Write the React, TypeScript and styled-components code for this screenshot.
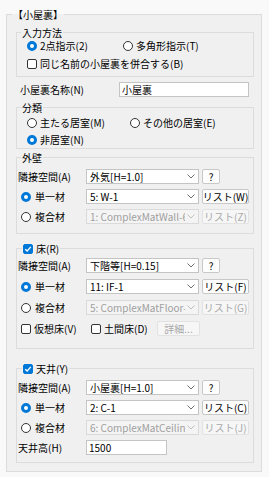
import styled, { createGlobalStyle } from 'styled-components';

const GlobalStyle = createGlobalStyle`
  html, body {
    margin: 0;
    padding: 0;
    background: #f9f9f9;
  }
  body {
    font-family: "Noto Sans CJK JP", "Noto Sans", sans-serif;
    font-size: 10px;
    color: #000;
  }
  * { box-sizing: border-box; }
`;

const Page = styled.div`
  width: 269px;
  height: 477px;
  padding: 8px 7px 0 6px;
`;

const Group = styled.fieldset<{ $mt?: number }>`
  margin: ${({ $mt }) => $mt ?? 0}px 0 0;
  padding: 0;
  min-width: 0;
  border: 1px solid #dcdcdc;
  background: #f0f0f0;
`;

const Legend = styled.legend<{ $ml?: number }>`
  margin-left: ${({ $ml }) => $ml ?? 4}px;
  padding: 0 1px;
  height: 13px;
  line-height: 13px;
  display: flex;
  align-items: center;
  gap: 3px;
`;

const Body = styled.div<{ $pad: string; $gap?: number }>`
  padding: ${({ $pad }) => $pad};
  display: flex;
  flex-direction: column;
  gap: ${({ $gap }) => $gap ?? 5}px;
`;

const OptionRow = styled.div<{ $first?: number }>`
  display: grid;
  grid-template-columns: ${({ $first }) => ($first ? `${$first}px auto` : 'auto')};
  height: 13px;
  align-items: center;
`;

const Option = styled.label<{ $w?: number }>`
  display: flex;
  align-items: center;
  gap: 3px;
  width: ${({ $w }) => ($w ? `${$w}px` : 'auto')};
  white-space: nowrap;
  line-height: 13px;
`;

const RadioDot = styled.span<{ $on?: boolean }>`
  flex: none;
  width: 10px;
  height: 10px;
  border-radius: 50%;
  background: #fff;
  border: ${({ $on }) => ($on ? '3px solid #0078d7' : '1px solid #333')};
`;

const Box = styled.span<{ $on?: boolean }>`
  flex: none;
  width: 10px;
  height: 10px;
  border-radius: 2px;
  border: 1px solid ${({ $on }) => ($on ? '#0078d7' : '#333')};
  background: ${({ $on }) => ($on ? '#0078d7' : '#fff')};
  display: grid;
  place-items: center;
`;

const NameRow = styled.div`
  margin-top: 5px;
  padding-left: 4px;
  display: grid;
  grid-template-columns: 99px 130px;
  align-items: center;
  height: 15px;
`;

const TextBox = styled.div<{ $w?: number }>`
  width: ${({ $w }) => ($w ? `${$w}px` : '100%')};
  height: 15px;
  border: 1px solid #c4c4c4;
  background: #fff;
  padding-left: 2px;
  line-height: 13px;
  white-space: nowrap;
`;

const MatRow = styled.div`
  display: grid;
  grid-template-columns: 65px 113px auto;
  column-gap: 3px;
  height: 15px;
  align-items: center;
`;

const MatLabel = styled.div`
  display: flex;
  align-items: center;
  gap: 4px;
  white-space: nowrap;
  line-height: 13px;
`;

const RadioIndent = styled.span`
  display: flex;
  align-items: center;
  gap: 4px;
  margin-left: 3px;
`;

const Select = styled.div<{ $disabled?: boolean }>`
  height: 15px;
  display: flex;
  align-items: center;
  border: 1px solid ${({ $disabled }) => ($disabled ? '#dadada' : '#c4c4c4')};
  background: ${({ $disabled }) => ($disabled ? '#f4f4f4' : '#fff')};
  color: ${({ $disabled }) => ($disabled ? '#a0a0a0' : '#000')};
  padding: 0 3px;
`;

const SelectText = styled.span`
  flex: 1;
  overflow: hidden;
  white-space: nowrap;
  line-height: 13px;
`;

const Button = styled.div<{ $w: number; $disabled?: boolean }>`
  width: ${({ $w }) => $w}px;
  height: 15px;
  border: 1px solid ${({ $disabled }) => ($disabled ? '#e2e2e2' : '#c8c8c8')};
  border-radius: 2px;
  background: ${({ $disabled }) => ($disabled ? '#f6f6f6' : '#fdfdfd')};
  color: ${({ $disabled }) => ($disabled ? '#a8a8a8' : '#000')};
  display: flex;
  align-items: center;
  justify-content: center;
  line-height: 13px;
  white-space: nowrap;
`;

const FlagRow = styled.div`
  display: flex;
  align-items: center;
  height: 15px;
  padding-left: 3px;
`;

const Check = () => (
  <svg width="8" height="8" viewBox="0 0 8 8">
    <path d="M1.2 4.2 L3.2 6 L6.8 1.8" fill="none" stroke="#fff" strokeWidth="1.3" />
  </svg>
);

const Chevron = ({ color }: { color: string }) => (
  <svg width="8" height="5" viewBox="0 0 8 5" style={{ flex: 'none', marginLeft: 2 }}>
    <path d="M0.5 0.5 L4 4 L7.5 0.5" fill="none" stroke={color} strokeWidth="1" />
  </svg>
);

type Mat = {
  neighbor: string;
  single: string;
  complex: string;
  listKey: string;
  complexKey: string;
};

function MaterialRows({ neighbor, single, complex, listKey, complexKey }: Mat) {
  return (
    <>
      <MatRow>
        <MatLabel>隣接空間(A)</MatLabel>
        <Select>
          <SelectText>{neighbor}</SelectText>
          <Chevron color="#707070" />
        </Select>
        <Button $w={18}>?</Button>
      </MatRow>
      <MatRow>
        <MatLabel>
          <RadioIndent>
            <RadioDot $on />
            単一材
          </RadioIndent>
        </MatLabel>
        <Select>
          <SelectText>{single}</SelectText>
          <Chevron color="#707070" />
        </Select>
        <Button $w={47}>リスト({listKey})</Button>
      </MatRow>
      <MatRow>
        <MatLabel>
          <RadioIndent>
            <RadioDot />
            複合材
          </RadioIndent>
        </MatLabel>
        <Select $disabled>
          <SelectText>{complex}</SelectText>
          <Chevron color="#c0c0c0" />
        </Select>
        <Button $w={47} $disabled>
          リスト({complexKey})
        </Button>
      </MatRow>
    </>
  );
}

export default function App() {
  return (
    <Page>
      <GlobalStyle />
      <Group>
        <Legend $ml={5}>【小屋裏】</Legend>
        <Body $pad="5px 7px 8px 9px" $gap={0}>
          <Group>
            <Legend>入力方法</Legend>
            <Body $pad="0 0 6px 10px">
              <OptionRow $first={96}>
                <Option>
                  <RadioDot $on />
                  2点指示(2)
                </Option>
                <Option>
                  <RadioDot />
                  多角形指示(T)
                </Option>
              </OptionRow>
              <OptionRow>
                <Option>
                  <Box />
                  同じ名前の小屋裏を併合する(B)
                </Option>
              </OptionRow>
            </Body>
          </Group>

          <NameRow>
            <span>小屋裏名称(N)</span>
            <TextBox>小屋裏</TextBox>
          </NameRow>

          <Group $mt={4}>
            <Legend>分類</Legend>
            <Body $pad="2px 0 2px 10px" $gap={4}>
              <OptionRow $first={103}>
                <Option>
                  <RadioDot />
                  主たる居室(M)
                </Option>
                <Option>
                  <RadioDot />
                  その他の居室(E)
                </Option>
              </OptionRow>
              <OptionRow>
                <Option>
                  <RadioDot $on />
                  非居室(N)
                </Option>
              </OptionRow>
            </Body>
          </Group>

          <Group $mt={2}>
            <Legend>外壁</Legend>
            <Body $pad="5px 0 9px 1px">
              <MaterialRows
                neighbor="外気[H=1.0]"
                single="5: W-1"
                complex="1: ComplexMatWall-6"
                listKey="W"
                complexKey="Z"
              />
            </Body>
          </Group>

          <Group $mt={8}>
            <Legend $ml={5}>
              <Box $on>
                <Check />
              </Box>
              床(R)
            </Legend>
            <Body $pad="3px 0 12px 1px" $gap={6}>
              <MaterialRows
                neighbor="下階等[H=0.15]"
                single="11: IF-1"
                complex="5: ComplexMatFloor-"
                listKey="F"
                complexKey="G"
              />
              <FlagRow>
                <Option $w={70}>
                  <Box />
                  仮想床(V)
                </Option>
                <Option $w={66}>
                  <Box />
                  土間床(D)
                </Option>
                <Button $w={43} $disabled>
                  詳細...
                </Button>
              </FlagRow>
            </Body>
          </Group>

          <Group $mt={13}>
            <Legend $ml={5}>
              <Box $on>
                <Check />
              </Box>
              天井(Y)
            </Legend>
            <Body $pad="5px 0 7px 1px">
              <MaterialRows
                neighbor="小屋裏[H=1.0]"
                single="2: C-1"
                complex="6: ComplexMatCeiling"
                listKey="C"
                complexKey="J"
              />
              <MatRow>
                <MatLabel>天井高(H)</MatLabel>
                <TextBox $w={81}>1500</TextBox>
              </MatRow>
            </Body>
          </Group>
        </Body>
      </Group>
    </Page>
  );
}
